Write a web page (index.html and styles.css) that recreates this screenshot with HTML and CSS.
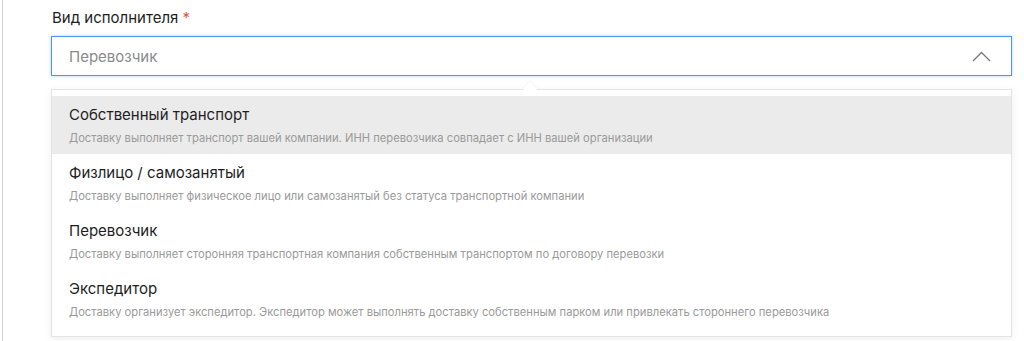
FILE: index.html
```html
<!DOCTYPE html>
<html lang="ru">
<head>
  <meta charset="UTF-8">
  <meta name="viewport" content="width=device-width, initial-scale=1.0">
  <title>Вид исполнителя</title>
  <link rel="stylesheet" href="styles.css">
</head>
<body>
  <div class="panel">
    <div class="field">
      <label class="field-label">Вид исполнителя <span class="required">*</span></label>
      <div class="select open">
        <span class="select-placeholder">Перевозчик</span>
        <svg class="chevron" width="19" height="11" viewBox="0 0 19 11">
          <polyline points="1,10 9.5,1.5 18,10" fill="none" stroke="#7a7a7a" stroke-width="1.3"/>
        </svg>
      </div>
      <div class="dropdown">
        <ul class="options">
          <li class="option active">
            <div class="option-title">Собственный транспорт</div>
            <div class="option-desc">Доставку выполняет транспорт вашей компании. ИНН перевозчика совпадает с ИНН вашей организации</div>
          </li>
          <li class="option">
            <div class="option-title">Физлицо / самозанятый</div>
            <div class="option-desc">Доставку выполняет физическое лицо или самозанятый без статуса транспортной компании</div>
          </li>
          <li class="option">
            <div class="option-title">Перевозчик</div>
            <div class="option-desc">Доставку выполняет сторонняя транспортная компания собственным транспортом по договору перевозки</div>
          </li>
          <li class="option">
            <div class="option-title">Экспедитор</div>
            <div class="option-desc">Доставку организует экспедитор. Экспедитор может выполнять доставку собственным парком или привлекать стороннего перевозчика</div>
          </li>
        </ul>
      </div>
    </div>
  </div>
</body>
</html>
```

FILE: styles.css
```css
html, body {
    margin: 0;
    height: 100%;
    background: #fff;
}

body {
    font-family: Inter, "Noto Sans", sans-serif;
    color: #1e1e1e;
}

.panel {
    margin-left: 2px;
    border-left: 1px solid #d2d2d2;
    height: 100%;
    padding: 9px 12px 0 48px;
    box-sizing: border-box;
}

.field {
    width: 961px;
}

.field-label {
    display: block;
    font-size: 15px;
    line-height: 18px;
    margin-bottom: 9px;
    padding-left: 1px;
}

.required {
    color: #e5553c;
}

.select {
    height: 40px;
    border: 1px solid #4b95f7;
    box-shadow: 0 0 3px rgba(75, 149, 247, 0.45);
    box-sizing: border-box;
    display: flex;
    align-items: center;
    justify-content: space-between;
    padding: 0 20px 0 17px;
}

.select-placeholder {
    font-size: 15px;
    color: #8a8a8a;
}

.chevron {
    display: block;
}

.dropdown {
    position: relative;
    margin-top: 13px;
    border: 1px solid #e4e4e4;
    box-shadow: 0 2px 8px rgba(0, 0, 0, 0.07);
    background: #fff;
    padding: 6px 0 8px;
}

.dropdown::before {
    content: "";
    position: absolute;
    top: -6px;
    left: 473px;
    width: 10px;
    height: 10px;
    background: #fff;
    transform: rotate(45deg);
    box-shadow: -1px -1px 2px rgba(0, 0, 0, 0.04);
}

.options {
    list-style: none;
    margin: 0;
    padding: 0;
    position: relative;
}

.option {
    height: 58px;
    box-sizing: border-box;
    padding: 10px 17px 0;
}

.option.active {
    background: #ebebeb;
}

.option-title {
    font-size: 15px;
    line-height: 18px;
    color: #1e1e1e;
}

.option-desc {
    margin-top: 7px;
    font-size: 11.2px;
    line-height: 14px;
    color: #9a9a9a;
}
```
